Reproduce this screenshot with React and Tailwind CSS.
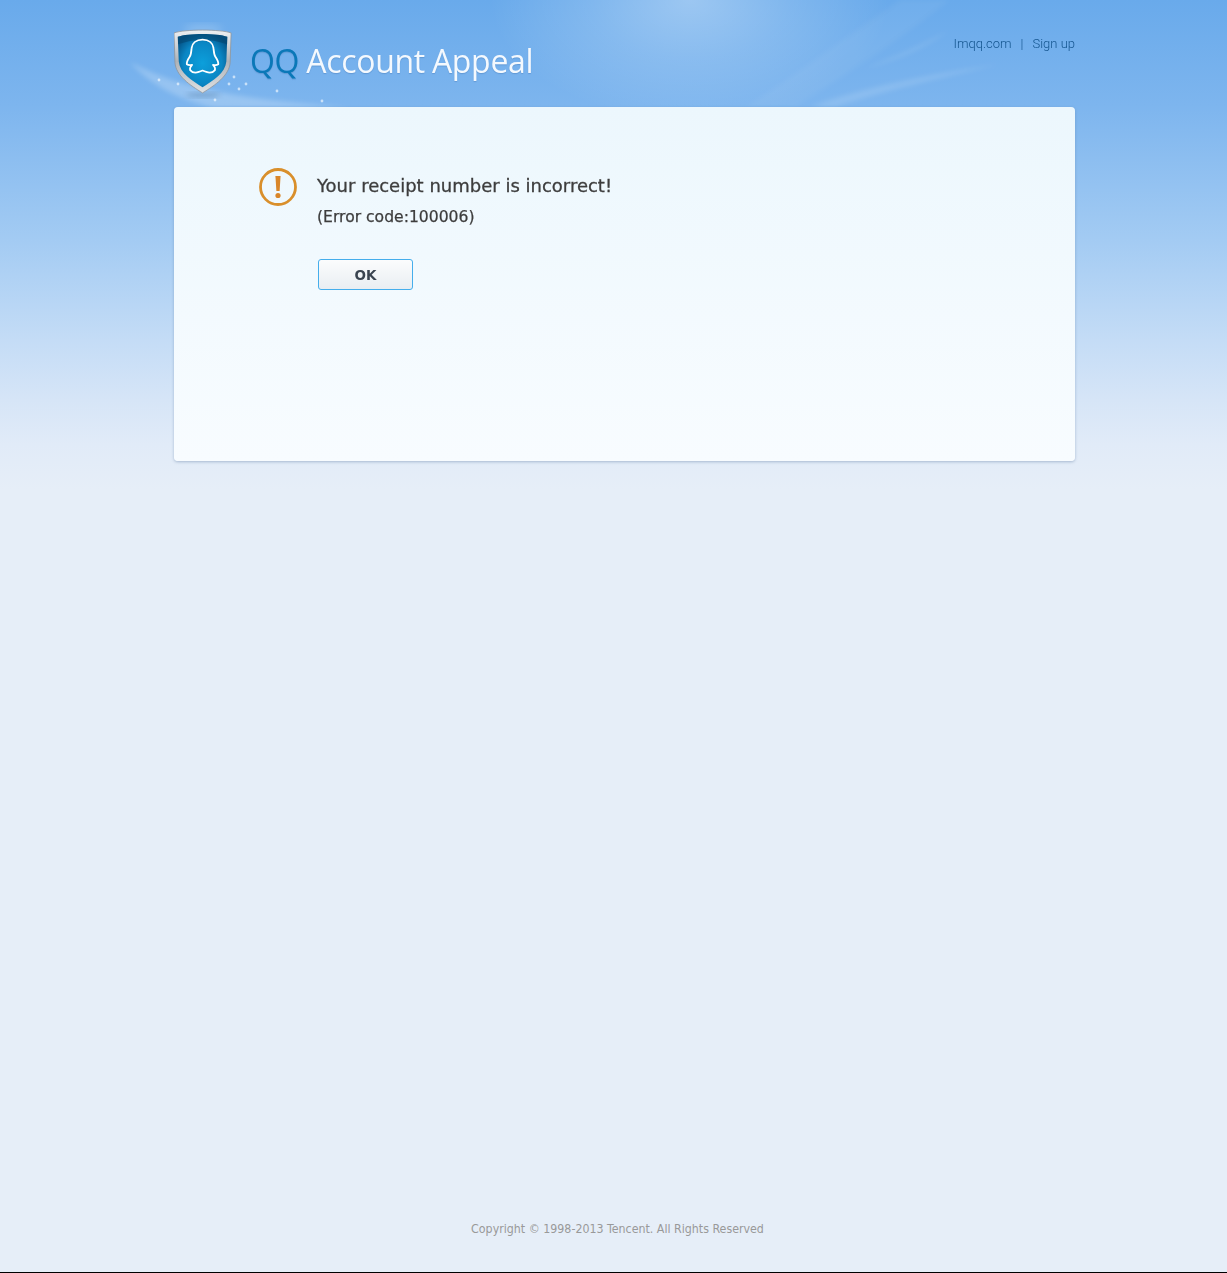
import React from 'react';

// QQ shield logo
const ShieldLogo = () => (
  <svg width="59" height="67" viewBox="1 0 62 70" className="block">
    <defs>
      <linearGradient id="rim" x1="0" y1="0" x2="0" y2="1">
        <stop offset="0" stopColor="#eef0f2" />
        <stop offset="0.5" stopColor="#aeb3b9" />
        <stop offset="1" stopColor="#e0e2e4" />
      </linearGradient>
      <radialGradient id="blue" cx="0.5" cy="0.55" r="0.6">
        <stop offset="0" stopColor="#0c9fdb" />
        <stop offset="0.65" stopColor="#0a86c4" />
        <stop offset="1" stopColor="#05568a" />
      </radialGradient>
    </defs>
    <path d="M1 5 C12 1 50 1 61 5 L60 36 C59 50 44 60 31 68 C18 60 3 50 2 36 Z" fill="url(#rim)" stroke="#8d9298" strokeWidth="0.8" />
    <path d="M5 9 C16 5 46 5 57 9 L56 35 C55 47 42 55 31 62 C20 55 7 47 6 35 Z" fill="url(#blue)" />
    <path d="M5 9 C16 5 46 5 57 9 L56.8 17 C40 11 22 11 5.2 17 Z" fill="#03466f" opacity="0.6" />
    <path
      d="M31 12 C24 12 20 16 19.5 21 C19 25 19 28 17.5 30 C15.5 33 14 35 14.5 38 C16 39 18 39 20 38.5 C18.5 40 17.5 42 18 44 C20 46.5 24 47 27 46 C29 45.5 30 45 31 44.5 C32 45 33 45.5 35 46 C38 47 42 46.5 44 44 C44.5 42 43.5 40 42 38.5 C44 39 46 39 47.5 38 C48 35 46.5 33 44.5 30 C43 28 43 25 42.5 21 C42 16 38 12 31 12 Z"
      fill="none"
      stroke="#fff"
      strokeWidth="1.9"
      strokeLinejoin="round"
    />
  </svg>
);

// rays and sparkles behind the header
const HeaderRays = () => (
  <svg width="1227" height="125" viewBox="0 0 1227 125" className="pointer-events-none absolute left-0 top-0">
    <defs>
      <radialGradient id="glow" cx="0.5" cy="0" r="0.5">
        <stop offset="0" stopColor="#fff" stopOpacity="0.34" />
        <stop offset="0.5" stopColor="#fff" stopOpacity="0.15" />
        <stop offset="1" stopColor="#fff" stopOpacity="0" />
      </radialGradient>
      <filter id="soft" x="-20%" y="-50%" width="140%" height="200%">
        <feGaussianBlur stdDeviation="2.5" />
      </filter>
      <filter id="softer" x="-30%" y="-60%" width="160%" height="220%">
        <feGaussianBlur stdDeviation="4" />
      </filter>
    </defs>
    <rect x="490" y="0" width="400" height="240" fill="url(#glow)" />
    <g filter="url(#soft)">
      <path d="M130 62 C190 95 270 100 350 108 L215 108 C180 100 150 85 130 62 Z" fill="#fff" opacity="0.22" />
      <path d="M745 107 C790 80 840 40 900 0 L950 0 C900 40 840 80 795 107 Z" fill="#fff" opacity="0.05" />
      <path d="M810 107 C860 88 930 74 1000 64 C940 78 880 92 835 107 Z" fill="#fff" opacity="0.13" />
      <path d="M860 70 C900 55 925 42 950 30 C925 48 900 60 860 70 Z" fill="#fff" opacity="0.1" />
    </g>
    <ellipse cx="203" cy="29" rx="20" ry="3" fill="#fff" opacity="0.3" filter="url(#softer)" />
    <ellipse cx="203" cy="95" rx="17" ry="2" fill="#4f7ba8" opacity="0.5" filter="url(#soft)" />
    {[[159, 80], [178, 84], [229, 84], [234, 77], [246, 84], [239, 89], [277, 91], [215, 100], [322, 101]].map(([x, y]) => (
      <circle key={`${x}-${y}`} cx={x} cy={y} r="1.4" fill="#fff" opacity="0.6" />
    ))}
  </svg>
);

const WarningIcon = () => (
  <svg width="38" height="38" viewBox="0 0 38 38" className="block shrink-0">
    <circle cx="19" cy="19" r="17.5" fill="none" stroke="#d98f2b" strokeWidth="2.8" />
    <path d="M16.4 8 H21.6 L20.6 23 H17.4 Z" fill="#d9862a" />
    <circle cx="19" cy="27.5" r="2.6" fill="#d9862a" />
  </svg>
);

const App = () => {
  return (
    <div className="relative flex h-[1273px] flex-col overflow-hidden border-b border-black bg-[linear-gradient(to_bottom,#69aaeb_0px,#7db5ee_105px,#a3cbf3_240px,#c4dcf6_340px,#d6e5f7_400px,#e1ebf8_445px,#e6eef8_490px,#e6eef8_100%)] font-['DejaVu_Sans',sans-serif]">
      <HeaderRays />

      <header className="relative flex h-[107px] shrink-0 items-start pl-[174px] pr-[152px]">
        <div className="mt-[28px]">
          <ShieldLogo />
        </div>
        <h1 className="ml-[17px] mt-[38px] whitespace-nowrap font-['Open_Sans',sans-serif] text-[32px] leading-[46px] tracking-[-0.3px] text-[#f4f9fe] [word-spacing:-1px] [text-shadow:0_1px_1px_rgba(60,110,170,0.35)]">
          <span className="text-[#0a78b8]">QQ</span> Account Appeal
        </h1>
        <nav className="ml-auto mt-[36px] flex items-center gap-[9px] font-['Roboto',sans-serif] text-[13px] font-light leading-[16px] text-[#14558f]">
          <a href="#">Imqq.com</a>
          <span>|</span>
          <a href="#">Sign up</a>
        </nav>
      </header>

      <main className="relative ml-[174px] h-[354px] w-[901px] rounded-[4px] bg-[linear-gradient(to_bottom,#ecf7fd,#f8fcff)] pl-[85px] pt-[61px] shadow-[0_1px_3px_rgba(90,120,160,0.45)]">
        <div className="flex items-start">
          <WarningIcon />
          <div className="ml-[20px]">
            <h2 className="mt-[6px] whitespace-nowrap text-[18px] leading-[24px] text-[#3d3d3d] [-webkit-text-stroke:0.3px_#3d3d3d]">Your receipt number is incorrect!</h2>
            <p className="mt-[9px] text-[15.6px] leading-[20px] text-[#3d3d3d] [-webkit-text-stroke:0.25px_#3d3d3d]">(Error code:100006)</p>
            <button className="ml-px mt-[32px] block h-[31px] w-[95px] rounded-[3px] border border-[#45aeec] bg-[linear-gradient(to_bottom,#fbfcfd,#e9eef2)] pt-px text-[13.5px] font-bold text-[#3a4450]">
              OK
            </button>
          </div>
        </div>
      </main>

      <footer className="mt-auto pb-[35px] pl-[8px] text-center font-['DejaVu_Sans_Condensed','Noto_Sans',sans-serif] text-[12.3px] leading-[16px] text-[#999]">
        Copyright © 1998-2013 Tencent. All Rights Reserved
      </footer>
    </div>
  );
};

export default App;
